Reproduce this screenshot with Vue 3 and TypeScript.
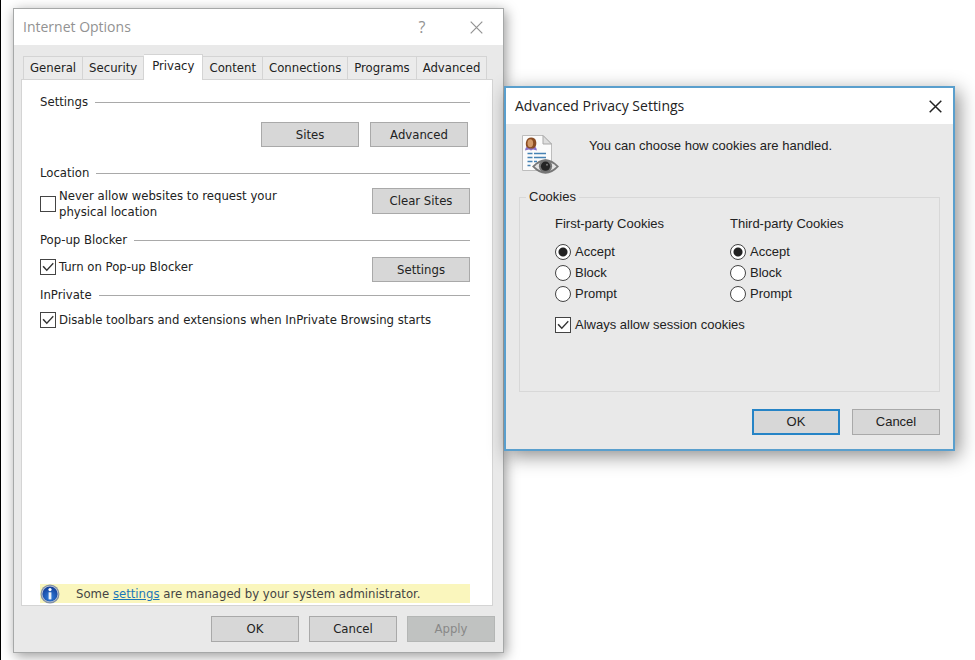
<script setup lang="ts">
import { ref } from 'vue'

const tabs = ['General', 'Security', 'Privacy', 'Content', 'Connections', 'Programs', 'Advanced']
const activeTab = ref('Privacy')
const blockLocation = ref(false)
const popupBlocker = ref(true)
const disableToolbars = ref(true)

const policies = ['Accept', 'Block', 'Prompt']
const parties = ref([
  { id: 'first', title: 'First-party Cookies', choice: 'Accept' },
  { id: 'third', title: 'Third-party Cookies', choice: 'Accept' },
])
const sessionCookies = ref(true)
</script>

<template>
  <main class="desktop">
    <section class="window options" aria-label="Internet Options">
      <header class="titlebar">
        <h1>Internet Options</h1>
        <button class="caption help" type="button" aria-label="Help">?</button>
        <button class="caption" type="button" aria-label="Close">
          <svg width="13" height="13" viewBox="0 0 13 13"><path d="M.7.7l11.6 11.6M12.3.7L.7 12.3" fill="none" stroke="currentColor" stroke-width="1.2" /></svg>
        </button>
      </header>
      <div class="body">
        <nav class="tabs" role="tablist">
          <button
            v-for="tab in tabs"
            :key="tab"
            type="button"
            role="tab"
            class="tab"
            :class="{ active: tab === activeTab }"
            :aria-selected="tab === activeTab"
            @click="activeTab = tab"
          >{{ tab }}</button>
        </nav>
        <div class="panel">
          <section class="group settings">
            <h2>Settings</h2>
            <div class="row end">
              <button class="btn wide" type="button">Sites</button>
              <button class="btn wide" type="button">Advanced</button>
            </div>
          </section>
          <section class="group location">
            <h2>Location</h2>
            <div class="row">
              <label class="check">
                <input v-model="blockLocation" type="checkbox" />
                <span>Never allow websites to request your<br />physical location</span>
              </label>
              <button class="btn wide" type="button">Clear Sites</button>
            </div>
          </section>
          <section class="group popup">
            <h2>Pop-up Blocker</h2>
            <div class="row">
              <label class="check">
                <input v-model="popupBlocker" type="checkbox" />
                <span>Turn on Pop-up Blocker</span>
              </label>
              <button class="btn wide" type="button">Settings</button>
            </div>
          </section>
          <section class="group">
            <h2>InPrivate</h2>
            <div class="row">
              <label class="check">
                <input v-model="disableToolbars" type="checkbox" />
                <span>Disable toolbars and extensions when InPrivate Browsing starts</span>
              </label>
            </div>
          </section>
          <p class="notice">
            <svg width="20" height="20" viewBox="0 0 20 20" aria-hidden="true">
              <defs>
                <radialGradient id="info-fill" cx=".5" cy=".7" r=".7">
                  <stop offset="0" stop-color="#2f7fdc" />
                  <stop offset="1" stop-color="#123c96" />
                </radialGradient>
              </defs>
              <circle cx="10" cy="10" r="9.5" fill="#8391a3" />
              <circle cx="10" cy="10" r="8.3" fill="#c3cbd8" />
              <circle cx="10" cy="10" r="7.6" fill="url(#info-fill)" />
              <circle cx="10" cy="5.6" r="1.6" fill="#fff" />
              <path d="M8.600 8.300h2.800v7.100H8.600z" fill="#e9eff8" />
            </svg>
            <span>Some <a href="#settings">settings</a> are managed by your system administrator.</span>
          </p>
        </div>
        <footer class="actions">
          <button class="btn" type="button">OK</button>
          <button class="btn" type="button">Cancel</button>
          <button class="btn" type="button" disabled>Apply</button>
        </footer>
      </div>
    </section>

    <section class="window privacy" aria-label="Advanced Privacy Settings">
      <header class="titlebar">
        <h1>Advanced Privacy Settings</h1>
        <button class="caption" type="button" aria-label="Close">
          <svg width="13" height="13" viewBox="0 0 13 13"><path d="M.7.7l11.6 11.6M12.3.7L.7 12.3" fill="none" stroke="currentColor" stroke-width="1.5" /></svg>
        </button>
      </header>
      <div class="body">
        <div class="intro">
          <svg width="38" height="40" viewBox="0 0 38 40" aria-hidden="true">
            <path d="M1.500 1.500h20.500l8.500 8.500v26.500h-29z" fill="#fbfbfb" stroke="#bdbdbd" />
            <path d="M22 1.500v8.500h8.500z" fill="#dedede" stroke="#a9a9a9" />
            <path d="M4 16.500c.5-4 3-5 6-5s5.500 1 6 5l-4-1-2 1-2-1z" fill="#8a72c8" />
            <path d="M5.500 13c-1.500-3-.8-9.500 4.700-9.500s6 6 4.200 9.500l-2.400 1.500H8z" fill="#8a4d24" />
            <ellipse cx="9.300" cy="9.300" rx="2.800" ry="4" fill="#d39a68" />
            <path d="M6.500 19.500h5m1.500 0h12M6.500 23.500h5m1.500 0h12M6.500 27.500h5m1.500 0h3M6.500 31.500h3" stroke="#4682b4" stroke-width="1.500" />
            <path d="M11 32.500Q24.500 18 38 32.500Q24.500 47 11 32.500z" fill="#777" />
            <path d="M13.500 32.500Q19 27.500 24.500 27.500T35.500 32.500Q30 37.500 24.500 37.500T13.500 32.500z" fill="#e4e4e4" />
            <circle cx="24.500" cy="32.200" r="6.600" fill="#737373" />
            <circle cx="24.500" cy="32.200" r="4.600" fill="#242424" />
            <circle cx="26" cy="30.800" r="1" fill="#777" />
          </svg>
          <p>You can choose how cookies are handled.</p>
        </div>
        <fieldset>
          <legend>Cookies</legend>
          <div class="parties">
            <div v-for="party in parties" :key="party.id" class="party" role="radiogroup" :aria-label="party.title">
              <h3>{{ party.title }}</h3>
              <label v-for="policy in policies" :key="policy" class="check">
                <input v-model="party.choice" type="radio" :name="party.id" :value="policy" />
                <span>{{ policy }}</span>
              </label>
            </div>
          </div>
          <label class="check">
            <input v-model="sessionCookies" type="checkbox" />
            <span>Always allow session cookies</span>
          </label>
        </fieldset>
        <footer class="actions">
          <button class="btn primary" type="button">OK</button>
          <button class="btn" type="button">Cancel</button>
        </footer>
      </div>
    </section>
  </main>
</template>

<style>
body {
  background: #fff;
}
</style>

<style scoped>
* {
  box-sizing: border-box;
}
h1, h2, h3, p {
  margin: 0;
  font-size: inherit;
  font-weight: 400;
}
button {
  margin: 0;
  padding: 0;
  font: inherit;
  color: inherit;
}
.desktop {
  display: grid;
  grid-template-columns: 491fr 451fr;
  min-height: 100vh;
  padding: 8px 20px 7px 12px;
  border-left: 1px solid #000;
  overflow: hidden;
  color: #222;
  white-space: nowrap;
}
.window {
  display: flex;
  flex-direction: column;
  min-width: 0;
  background: #e9e9e9;
}
.options {
  border: 1px solid #a6a8a8;
  box-shadow: 2px 3px 12px rgba(0, 0, 0, 0.4);
  font: 13px/16px "DejaVu Sans Condensed", "Noto Sans", sans-serif;
}
.privacy {
  position: relative;
  align-self: start;
  margin-top: 78px;
  border: 2px solid #5a9fcd;
  box-shadow: 4px 5px 18px rgba(0, 0, 0, 0.45);
  font: 13px/16px "Liberation Sans", sans-serif;
}
.titlebar {
  display: flex;
  align-items: center;
  height: 36px;
  padding-left: 9px;
  background: #fff;
  font: 14px/20px "Open Sans", sans-serif;
}
.titlebar h1 {
  flex: 1;
}
.options .titlebar {
  color: #929292;
}
.caption {
  display: flex;
  align-items: center;
  justify-content: center;
  width: 36px;
  height: 30px;
  border: 0;
  background: none;
}
.help {
  font-size: 16px;
}
.options .caption {
  width: 54px;
}
.body {
  display: flex;
  flex: 1;
  flex-direction: column;
}
.options .body {
  padding: 9px 10px 10px 7px;
}
.tabs {
  display: flex;
  align-items: flex-end;
  padding-left: 2px;
}
.tab {
  height: 23px;
  padding: 0 6px;
  border: 1px solid #d4d4d4;
  border-bottom: 0;
  border-left-width: 0;
  background: #ebebeb;
}
.tab:first-child {
  border-left-width: 1px;
}
.tab.active {
  height: 26px;
  margin-bottom: -1px;
  padding: 0 8px 4px;
  background: #fff;
  z-index: 1;
}
.panel {
  display: flex;
  flex: 1;
  flex-direction: column;
  padding: 14px 22px 2px 18px;
  border: 1px solid #d4d4d4;
  background: #fff;
}
.group h2 {
  display: flex;
  align-items: center;
  gap: 7px;
  margin-bottom: 7px;
}
.group h2::after {
  content: "";
  flex: 1;
  height: 1px;
  background: #a9a9a9;
}
.settings {
  margin-bottom: 18px;
}
.settings h2 {
  margin-bottom: 12px;
}
.location {
  margin-bottom: 12px;
}
.popup {
  margin-bottom: 5px;
}
.popup h2 {
  margin-bottom: 9px;
}
.row {
  display: flex;
  align-items: flex-start;
  justify-content: space-between;
}
.row.end {
  justify-content: flex-end;
  gap: 11px;
  padding-right: 2px;
}
.btn {
  width: 88px;
  height: 26px;
  border: 1px solid #a9a9a9;
  background: #d7d7d7;
}
.btn.wide {
  width: 98px;
}
.btn:disabled {
  border-color: #b4b6b5;
  background: #c0c2c1;
  color: #888;
}
.btn.primary {
  border: 2px solid #2684c6;
}
.settings .btn,
.popup .btn {
  height: 25px;
}
.check {
  display: flex;
  align-items: center;
  gap: 3px;
  min-height: 20px;
}
.check input {
  position: relative;
  flex: none;
  appearance: none;
  width: 16px;
  height: 16px;
  margin: 0;
  border: 1px solid #444;
  background: #fff;
}
.check input[type="checkbox"]:checked::after {
  content: "";
  position: absolute;
  inset: 1px;
  background: #333;
  clip-path: polygon(4% 48%, 14% 40%, 40% 68%, 90% 14%, 98% 23%, 40% 86%);
}
.check input[type="radio"] {
  border-radius: 50%;
}
.check input[type="radio"]:checked {
  background: radial-gradient(circle, #222 4px, #fff 5px);
}
.notice {
  display: flex;
  align-items: center;
  gap: 16px;
  height: 19px;
  margin-top: auto;
  background: #faf6bd;
  color: #444;
}
.notice a {
  color: #1c76b8;
}
.actions {
  display: flex;
  justify-content: flex-end;
  gap: 10px;
  padding-top: 10px;
}
.options .actions {
  margin-right: -2px;
}
.privacy .body {
  padding: 10px 13px 14px;
}
.intro {
  display: flex;
  gap: 30px;
  padding-left: 2px;
}
.intro p {
  padding-top: 4px;
}
fieldset {
  min-width: 0;
  height: 203px;
  margin: 15px 0 0;
  padding: 11px 34px 0 35px;
  border: 1px solid #d8d8d8;
}
legend {
  margin-left: -29px;
  padding: 0 3px;
}
.parties {
  display: grid;
  grid-template-columns: 1fr 1fr;
  margin-bottom: 11px;
}
.party h3 {
  margin-bottom: 9px;
}
.party .check {
  min-height: 21px;
}
.privacy .check {
  gap: 4px;
}
.privacy .actions {
  gap: 12px;
  padding-top: 17px;
}
</style>
